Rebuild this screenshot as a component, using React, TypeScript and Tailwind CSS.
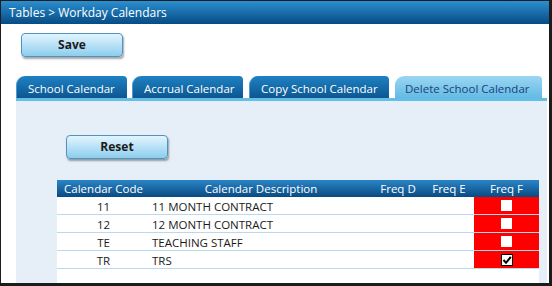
const tabs = [
  { label: 'School Calendar', w: 'w-[111px]', ml: 'ml-0' },
  { label: 'Accrual Calendar', w: 'w-[111px]', ml: 'ml-[5px]' },
  { label: 'Copy School Calendar', w: 'w-[140px]', ml: 'ml-[6px]' },
];

const rows = [
  { code: '11', desc: '11 MONTH CONTRACT', checked: false },
  { code: '12', desc: '12 MONTH CONTRACT', checked: false },
  { code: 'TE', desc: 'TEACHING STAFF', checked: false },
  { code: 'TR', desc: 'TRS', checked: true },
];

function Btn({ label }: { label: string }) {
  return (
    <button className="w-[102px] h-[24px] rounded-[4px] border border-[#4f93bf] bg-gradient-to-b from-[#e3f5fd] to-[#8ccdee] shadow-[1px_2px_2px_rgba(0,0,0,0.35)] text-[12px] font-bold text-[#1b1b1b]">
      {label}
    </button>
  );
}

function Check({ checked }: { checked: boolean }) {
  if (!checked) return <div className="w-[11px] h-[11px] bg-white" />;
  return (
    <div className="w-[12px] h-[12px] bg-white border border-black flex items-center justify-center">
      <svg width="10" height="10" viewBox="0 0 10 10">
        <path d="M1.5 5 L4 7.8 L8.8 1.8" fill="none" stroke="#000" strokeWidth="2" />
      </svg>
    </div>
  );
}

export default function App() {
  return (
    <div className="w-[552px] h-[286px] border-l border-t border-r-[3px] border-b-[3px] border-[#1c1c1c] bg-white flex flex-col overflow-hidden font-['Open_Sans',sans-serif]">
      {/* Title bar */}
      <div className="h-[23px] shrink-0 bg-gradient-to-b from-[#2b8fd0] to-[#064c84] text-white text-[12px] pl-[8px] flex items-center">
        Tables &gt; Workday Calendars
      </div>

      <div className="pl-[20px] pt-[7px] shrink-0">
        <Btn label="Save" />
      </div>

      {/* Tabs */}
      <div className="flex pl-[15px] mt-[19px] shrink-0 h-[22px]">
        {tabs.map((t) => (
          <div
            key={t.label}
            className={`${t.w} ${t.ml} h-[22px] rounded-tl-[9px] rounded-tr-[4px] bg-gradient-to-b from-[#1f82c4] to-[#0b5791] text-white text-[11.5px] pl-[11px] pt-[5px] leading-[16px] border-l border-[#4b9bd0]`}
          >
            {t.label}
          </div>
        ))}
        <div className="w-[147px] ml-[6px] h-[22px] rounded-tl-[9px] rounded-tr-[4px] bg-gradient-to-b from-[#9ad6f2] to-[#62bbe5] text-[#1d3f7a] text-[11.5px] pl-[10px] pt-[5px] leading-[16px]">
          Delete School Calendar
        </div>
      </div>

      {/* Panel */}
      <div className="ml-[15px] mr-[2px] flex-1 flex flex-col border-t-[3px] border-[#66bde6] bg-[#e6eef7]">
        <div className="pl-[50px] pt-[32px]">
          <Btn label="Reset" />
        </div>

        <div className="ml-[41px] mt-[21px] w-[482px] flex-1 bg-white text-[11.5px]">
          <div className="h-[17px] flex bg-gradient-to-b from-[#2a86c7] to-[#0a4a82] text-white leading-[17px]">
            <div className="w-[93px] text-center">Calendar Code</div>
            <div className="w-[222px] text-center">Calendar Description</div>
            <div className="w-[52px] text-center">Freq D</div>
            <div className="w-[50px] text-center">Freq E</div>
            <div className="flex-1 text-center">Freq F</div>
          </div>
          {rows.map((r) => (
            <div key={r.code} className="h-[18px] flex border-b border-[#b9d9ee] text-[#1a1a1a] leading-[19px]">
              <div className="w-[93px] text-center">{r.code}</div>
              <div className="w-[222px] pl-[2px]">{r.desc}</div>
              <div className="w-[52px]" />
              <div className="w-[50px]" />
              <div className="flex-1 bg-[#ff0000] flex items-center justify-center">
                <Check checked={r.checked} />
              </div>
            </div>
          ))}
        </div>
      </div>
    </div>
  );
}
